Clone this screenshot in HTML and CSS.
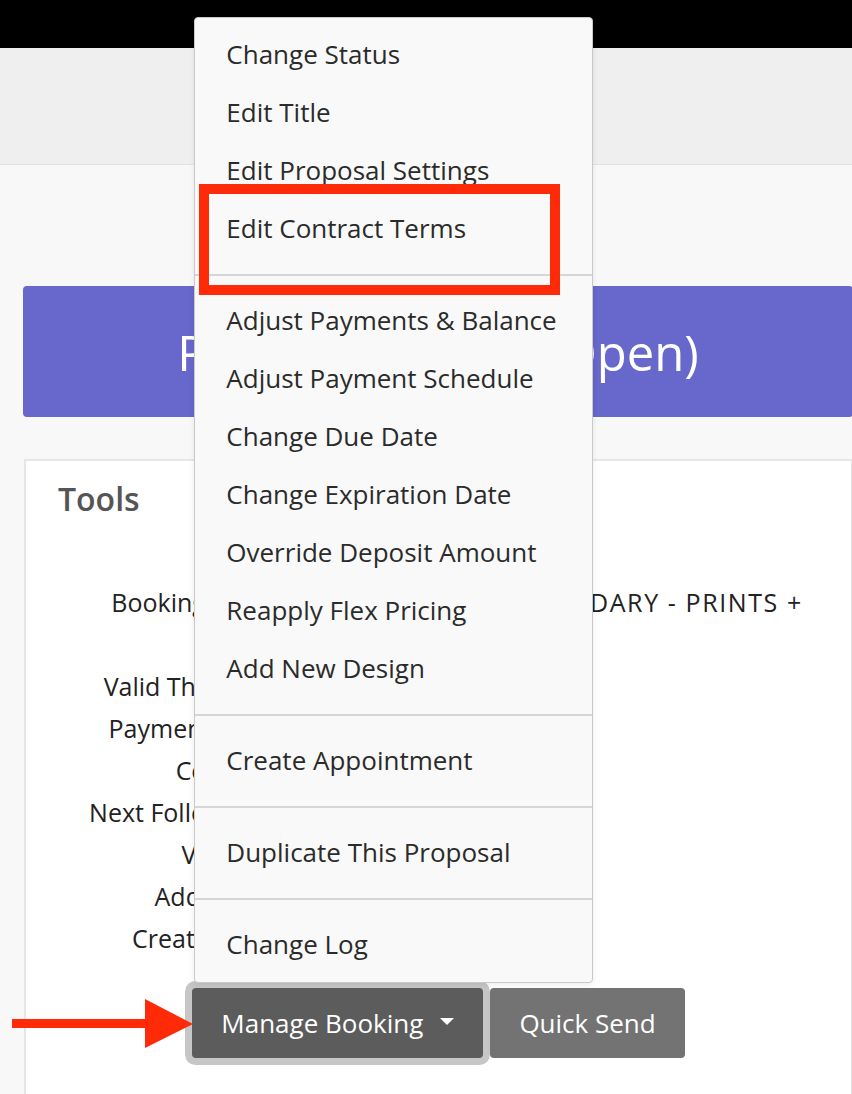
FILE: index.html
```html
<!DOCTYPE html>
<html lang="en">

<head>
    <meta charset="UTF-8">
    <meta name="viewport" content="width=device-width, initial-scale=1.0">
    <title>Proposal 10245</title>
    <link rel="stylesheet" href="styles.css">
</head>

<body>
    <div class="topbar"></div>
    <div class="subnav"></div>

    <main class="page">
        <div class="status-banner">Proposal 10245 (Open)</div>

        <section class="panel">
            <h2 class="panel-title">Tools</h2>

            <dl class="details">
                <dt>Booking Item:</dt>
                <dd class="package">GOLD PACKAGE - LEGENDARY - PRINTS +<br>ALBUM</dd>
                <dt>Valid Through:</dt>
                <dd>June 30, 2019</dd>
                <dt>Payment Due:</dt>
                <dd>$1,250.00</dd>
                <dt>Contact:</dt>
                <dd>Jessica Miller</dd>
                <dt>Next Follow Up:</dt>
                <dd>May 14, 2019</dd>
                <dt>Viewed:</dt>
                <dd>3 times</dd>
                <dt>Added By:</dt>
                <dd>Studio Admin</dd>
                <dt>Created On:</dt>
                <dd>April 2, 2019</dd>
            </dl>

            <div class="actions">
                <div class="btn-group">
                    <button class="btn btn-dark">Manage Booking <span class="caret"></span></button>

                    <!-- opens upward over the panel -->
                    <ul class="dropdown-menu">
                        <li><a href="#">Change Status</a></li>
                        <li><a href="#">Edit Title</a></li>
                        <li><a href="#">Edit Proposal Settings</a></li>
                        <li><a href="#">Edit Contract Terms</a></li>
                        <li class="divider"></li>
                        <li><a href="#">Adjust Payments &amp; Balance</a></li>
                        <li><a href="#">Adjust Payment Schedule</a></li>
                        <li><a href="#">Change Due Date</a></li>
                        <li><a href="#">Change Expiration Date</a></li>
                        <li><a href="#">Override Deposit Amount</a></li>
                        <li><a href="#">Reapply Flex Pricing</a></li>
                        <li><a href="#">Add New Design</a></li>
                        <li class="divider"></li>
                        <li><a href="#">Create Appointment</a></li>
                        <li class="divider"></li>
                        <li><a href="#">Duplicate This Proposal</a></li>
                        <li class="divider"></li>
                        <li><a href="#">Change Log</a></li>
                    </ul>
                </div>
                <button class="btn btn-gray">Quick Send</button>
            </div>
        </section>
    </main>

    <!-- callouts -->
    <div class="callout-box"></div>
    <svg class="callout-arrow" width="186" height="56" viewBox="0 0 186 56">
        <rect x="2" y="23" width="138" height="9" fill="#ff2a08" />
        <polygon points="135,3 183,28 135,52" fill="#ff2a08" />
    </svg>
</body>

</html>
```

FILE: styles.css
```css
body {
    font-family: 'Open Sans', 'Liberation Sans', sans-serif;
    background-color: #f8f8f8;
    margin: 0;
    padding: 0;
    position: relative;
    overflow: hidden;
    height: 1094px;
}

.topbar {
    height: 48px;
    background-color: #000;
}

.subnav {
    height: 116px;
    background-color: #efefef;
    border-bottom: 1px solid #e1e1e1;
}

.page {
    margin-left: 23px;
    width: 830px;
    padding-top: 121px;
}

.status-banner {
    height: 131px;
    background-color: #6767cc;
    border-radius: 4px;
    color: #fff;
    font-size: 49px;
    display: flex;
    align-items: center;
    justify-content: center;
}

.panel {
    margin-top: 42px;
    margin-left: 1px;
    background-color: #fff;
    border: 2px solid #e6e6e6;
    padding: 18px 32px 60px 32px;
}

.panel-title {
    margin: 0;
    font-size: 32px;
    font-weight: 600;
    line-height: 40px;
    color: #555;
}

.details {
    margin: 62px 0 0;
    display: grid;
    grid-template-columns: 214px 1fr;
    column-gap: 2px;
    font-size: 25px;
    line-height: 42px;
    color: #222;
}

.details dt {
    text-align: right;
}

.details dd {
    margin: 0;
    white-space: nowrap;
}

.details .package {
    letter-spacing: 1.6px;
}

.actions {
    margin-top: 29px;
    display: flex;
    justify-content: center;
    gap: 7px;
}

.btn-group {
    position: relative;
}

.btn {
    font-family: inherit;
    font-size: 26px;
    color: #fff;
    height: 70px;
    padding: 0 29px;
    border: none;
    border-radius: 4px;
    cursor: pointer;
    display: flex;
    align-items: center;
}

.btn-dark {
    background-color: #5c5c5c;
    box-shadow: 0 0 0 7px #c6c6c6;
}

.btn-gray {
    background-color: #737373;
}

.caret {
    margin-left: 17px;
    width: 0;
    height: 0;
    border-top: 7px solid #fff;
    border-left: 7px solid transparent;
    border-right: 7px solid transparent;
    margin-top: -4px;
}

/* dropup menu */
.dropdown-menu {
    position: absolute;
    left: 2px;
    bottom: calc(100% + 5px);
    width: 399px;
    box-sizing: border-box;
    margin: 0;
    padding: 7px 0 9px;
    list-style: none;
    background-color: #f9f9f9;
    border: 1px solid #c9c9c9;
    border-radius: 4px;
    box-shadow: 0 2px 6px rgba(0, 0, 0, 0.08);
    z-index: 10;
}

.dropdown-menu a {
    display: block;
    height: 58px;
    line-height: 58px;
    padding-left: 31px;
    font-size: 26px;
    color: #2b2b2b;
    text-decoration: none;
    white-space: nowrap;
}

.dropdown-menu .divider {
    height: 2px;
    margin: 17px 0 15px;
    background-color: #d6d6d6;
}

.callout-box {
    position: absolute;
    left: 199px;
    top: 184px;
    width: 361px;
    height: 111px;
    box-sizing: border-box;
    border: 10px solid #ff2a08;
    z-index: 20;
}

.callout-arrow {
    position: absolute;
    left: 10px;
    top: 996px;
    z-index: 20;
}
```
